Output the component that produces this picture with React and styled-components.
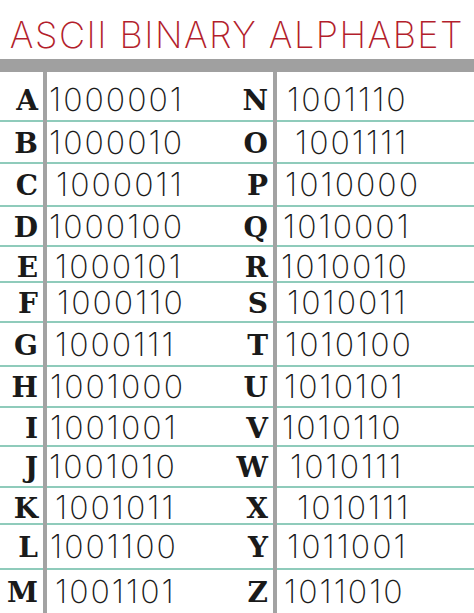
import React from 'react';
import styled, { createGlobalStyle } from 'styled-components';

const GlobalStyle = createGlobalStyle`
  html, body {
    margin: 0;
    padding: 0;
    background: #ffffff;
    overflow: hidden;
  }
`;

const Page = styled.div`
  width: 474px;
  height: 613px;
  overflow: hidden;
  background: #fff;
`;

const Title = styled.h1`
  margin: 0;
  height: 59px;
  padding-top: 17px;
  box-sizing: border-box;
  font-family: Inter, 'Liberation Sans', sans-serif;
  font-weight: 200;
  font-size: 36px;
  line-height: 36px;
  letter-spacing: 1.5px;
  color: #b31e2c;
  text-align: center;
  white-space: nowrap;
`;

const HeaderBar = styled.div`
  height: 13px;
  background: #a0a0a0;
`;

const Table = styled.div`
  position: relative;

  &::before,
  &::after {
    content: '';
    position: absolute;
    top: 0;
    bottom: 0;
    width: 4px;
    background: #a3a3a3;
    z-index: 1;
  }
  &::before {
    left: 43px;
  }
  &::after {
    left: 273px;
  }
`;

const Row = styled.div`
  display: grid;
  grid-template-columns: 43px 187px 43px 1fr;
  height: ${(p) => p.$h}px;
  box-sizing: border-box;
  border-bottom: ${(p) => (p.$last ? 'none' : '2px solid #8fcbbb')};
  padding-top: ${(p) => p.$pt || 0}px;
`;

const Letter = styled.div`
  display: flex;
  align-items: center;
  justify-content: flex-end;
  padding-right: 5px;
  padding-top: 2px;
  font-family: 'DejaVu Serif', 'Liberation Serif', serif;
  font-weight: 700;
  font-size: 28px;
  color: #1a1a1a;
`;

const Code = styled.div`
  display: flex;
  align-items: center;
  padding-left: ${(p) => 4 + p.$indent}px;
  font-family: Inter, 'Liberation Sans', sans-serif;
  font-weight: 200;
  font-size: 32px;
  letter-spacing: 2px;
  color: #1a1a1a;
  white-space: nowrap;
`;

const rows = [
  { h: 50, pt: 6, l: ['A', '1000001', 2], r: ['N', '1001110', 10] },
  { h: 42, l: ['B', '1000010', 2], r: ['O', '1001111', 18] },
  { h: 43, l: ['C', '1000011', 9], r: ['P', '1010000', 8] },
  { h: 40, l: ['D', '1000100', 2], r: ['Q', '1010001', 6] },
  { h: 36, l: ['E', '1000101', 8], r: ['R', '1010010', 4] },
  { h: 40, l: ['F', '1000110', 10], r: ['S', '1010011', 10] },
  { h: 44, l: ['G', '1000111', 8], r: ['T', '1010100', 8] },
  { h: 41, l: ['H', '1001000', 3], r: ['U', '1010101', 7] },
  { h: 39, l: ['I', '1001001', 3], r: ['V', '1010110', 5] },
  { h: 41, l: ['J', '1001010', 2], r: ['W', '1010111', 13] },
  { h: 37, l: ['K', '1001011', 8], r: ['X', '1010111', 20] },
  { h: 45, l: ['L', '1001100', 3], r: ['Y', '1011001', 10] },
  { h: 43, l: ['M', '1001101', 8], r: ['Z', '1011010', 7], last: true },
];

const App = () => {
  return (
    <Page>
      <GlobalStyle />
      <Title>ASCII BINARY ALPHABET</Title>
      <HeaderBar />
      <Table>
        {rows.map((row) => (
          <Row key={row.l[0]} $h={row.h} $pt={row.pt} $last={row.last}>
            <Letter>{row.l[0]}</Letter>
            <Code $indent={row.l[2]}>{row.l[1]}</Code>
            <Letter>{row.r[0]}</Letter>
            <Code $indent={row.r[2]}>{row.r[1]}</Code>
          </Row>
        ))}
      </Table>
    </Page>
  );
};

export default App;
